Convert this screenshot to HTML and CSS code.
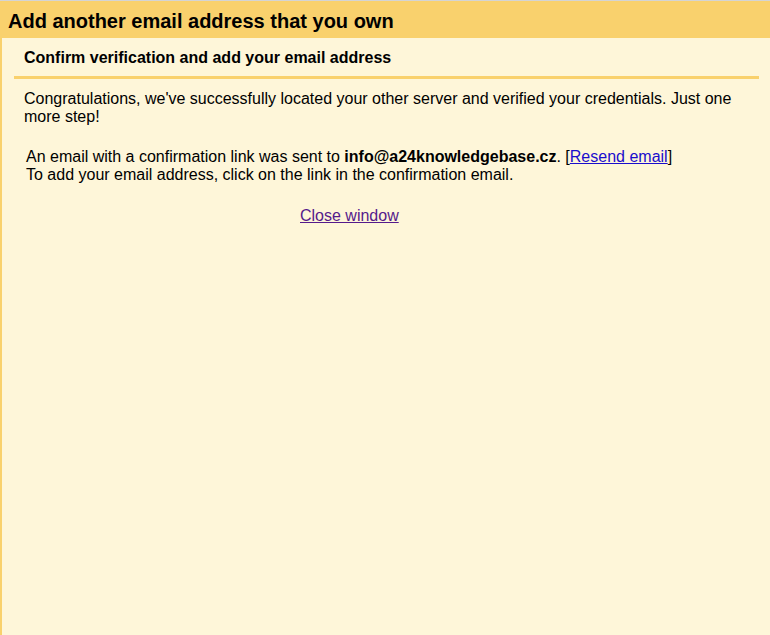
FILE: index.html
```html
<!DOCTYPE html>
<html>
<head>
<meta charset="utf-8">
<link rel="stylesheet" href="styles.css">
</head>
<body>
<div class="page">
  <div class="title">Add another email address that you own</div>
  <div class="content">
    <div class="section">
      <div class="subhead">Confirm verification and add your email address</div>
      <p class="intro">Congratulations, we've successfully located your other server and verified your credentials. Just one more step!</p>
      <div class="notice">
        An email with a confirmation link was sent to <b>info@a24knowledgebase.cz</b>. [<a class="resend" href="#">Resend email</a>]<br>
        To add your email address, click on the link in the confirmation email.
      </div>
      <div class="close-row"><a class="close" href="#">Close window</a></div>
    </div>
  </div>
</div>
</body>
</html>
```
FILE: styles.css
```css
html, body {
  margin: 0;
  padding: 0;
  height: 100%;
}
body {
  font-family: "Liberation Sans", Arial, sans-serif;
  color: #000;
  background: #fef6d9;
}
.page {
  border-top: 1px solid #d4d4d4;
  min-height: 100%;
  box-sizing: border-box;
  display: flex;
  flex-direction: column;
}
.title {
  background: #f9d16d;
  height: 33px;
  line-height: 33px;
  padding: 4px 0 0 8px;
  font-size: 20px;
  font-weight: bold;
}
.content {
  flex: 1;
  border-left: 2px solid #f9d16d;
  background: #fef6d9;
  padding: 0 11px 0 12px;
}
.subhead {
  font-size: 16px;
  font-weight: bold;
  line-height: 18px;
  padding: 11px 10px 9px;
  border-bottom: 3px solid #f9d16d;
}
.intro {
  margin: 11px 0 0;
  padding: 0 10px;
  font-size: 16px;
  line-height: 18px;
}
.notice {
  margin-top: 22px;
  padding: 0 12px;
  font-size: 16px;
  line-height: 18px;
}
.resend {
  color: #1a0dcc;
}
.close-row {
  margin-top: 23px;
  padding-left: 286px;
  font-size: 16px;
  line-height: 18px;
}
.close {
  color: #551a8b;
}
```
